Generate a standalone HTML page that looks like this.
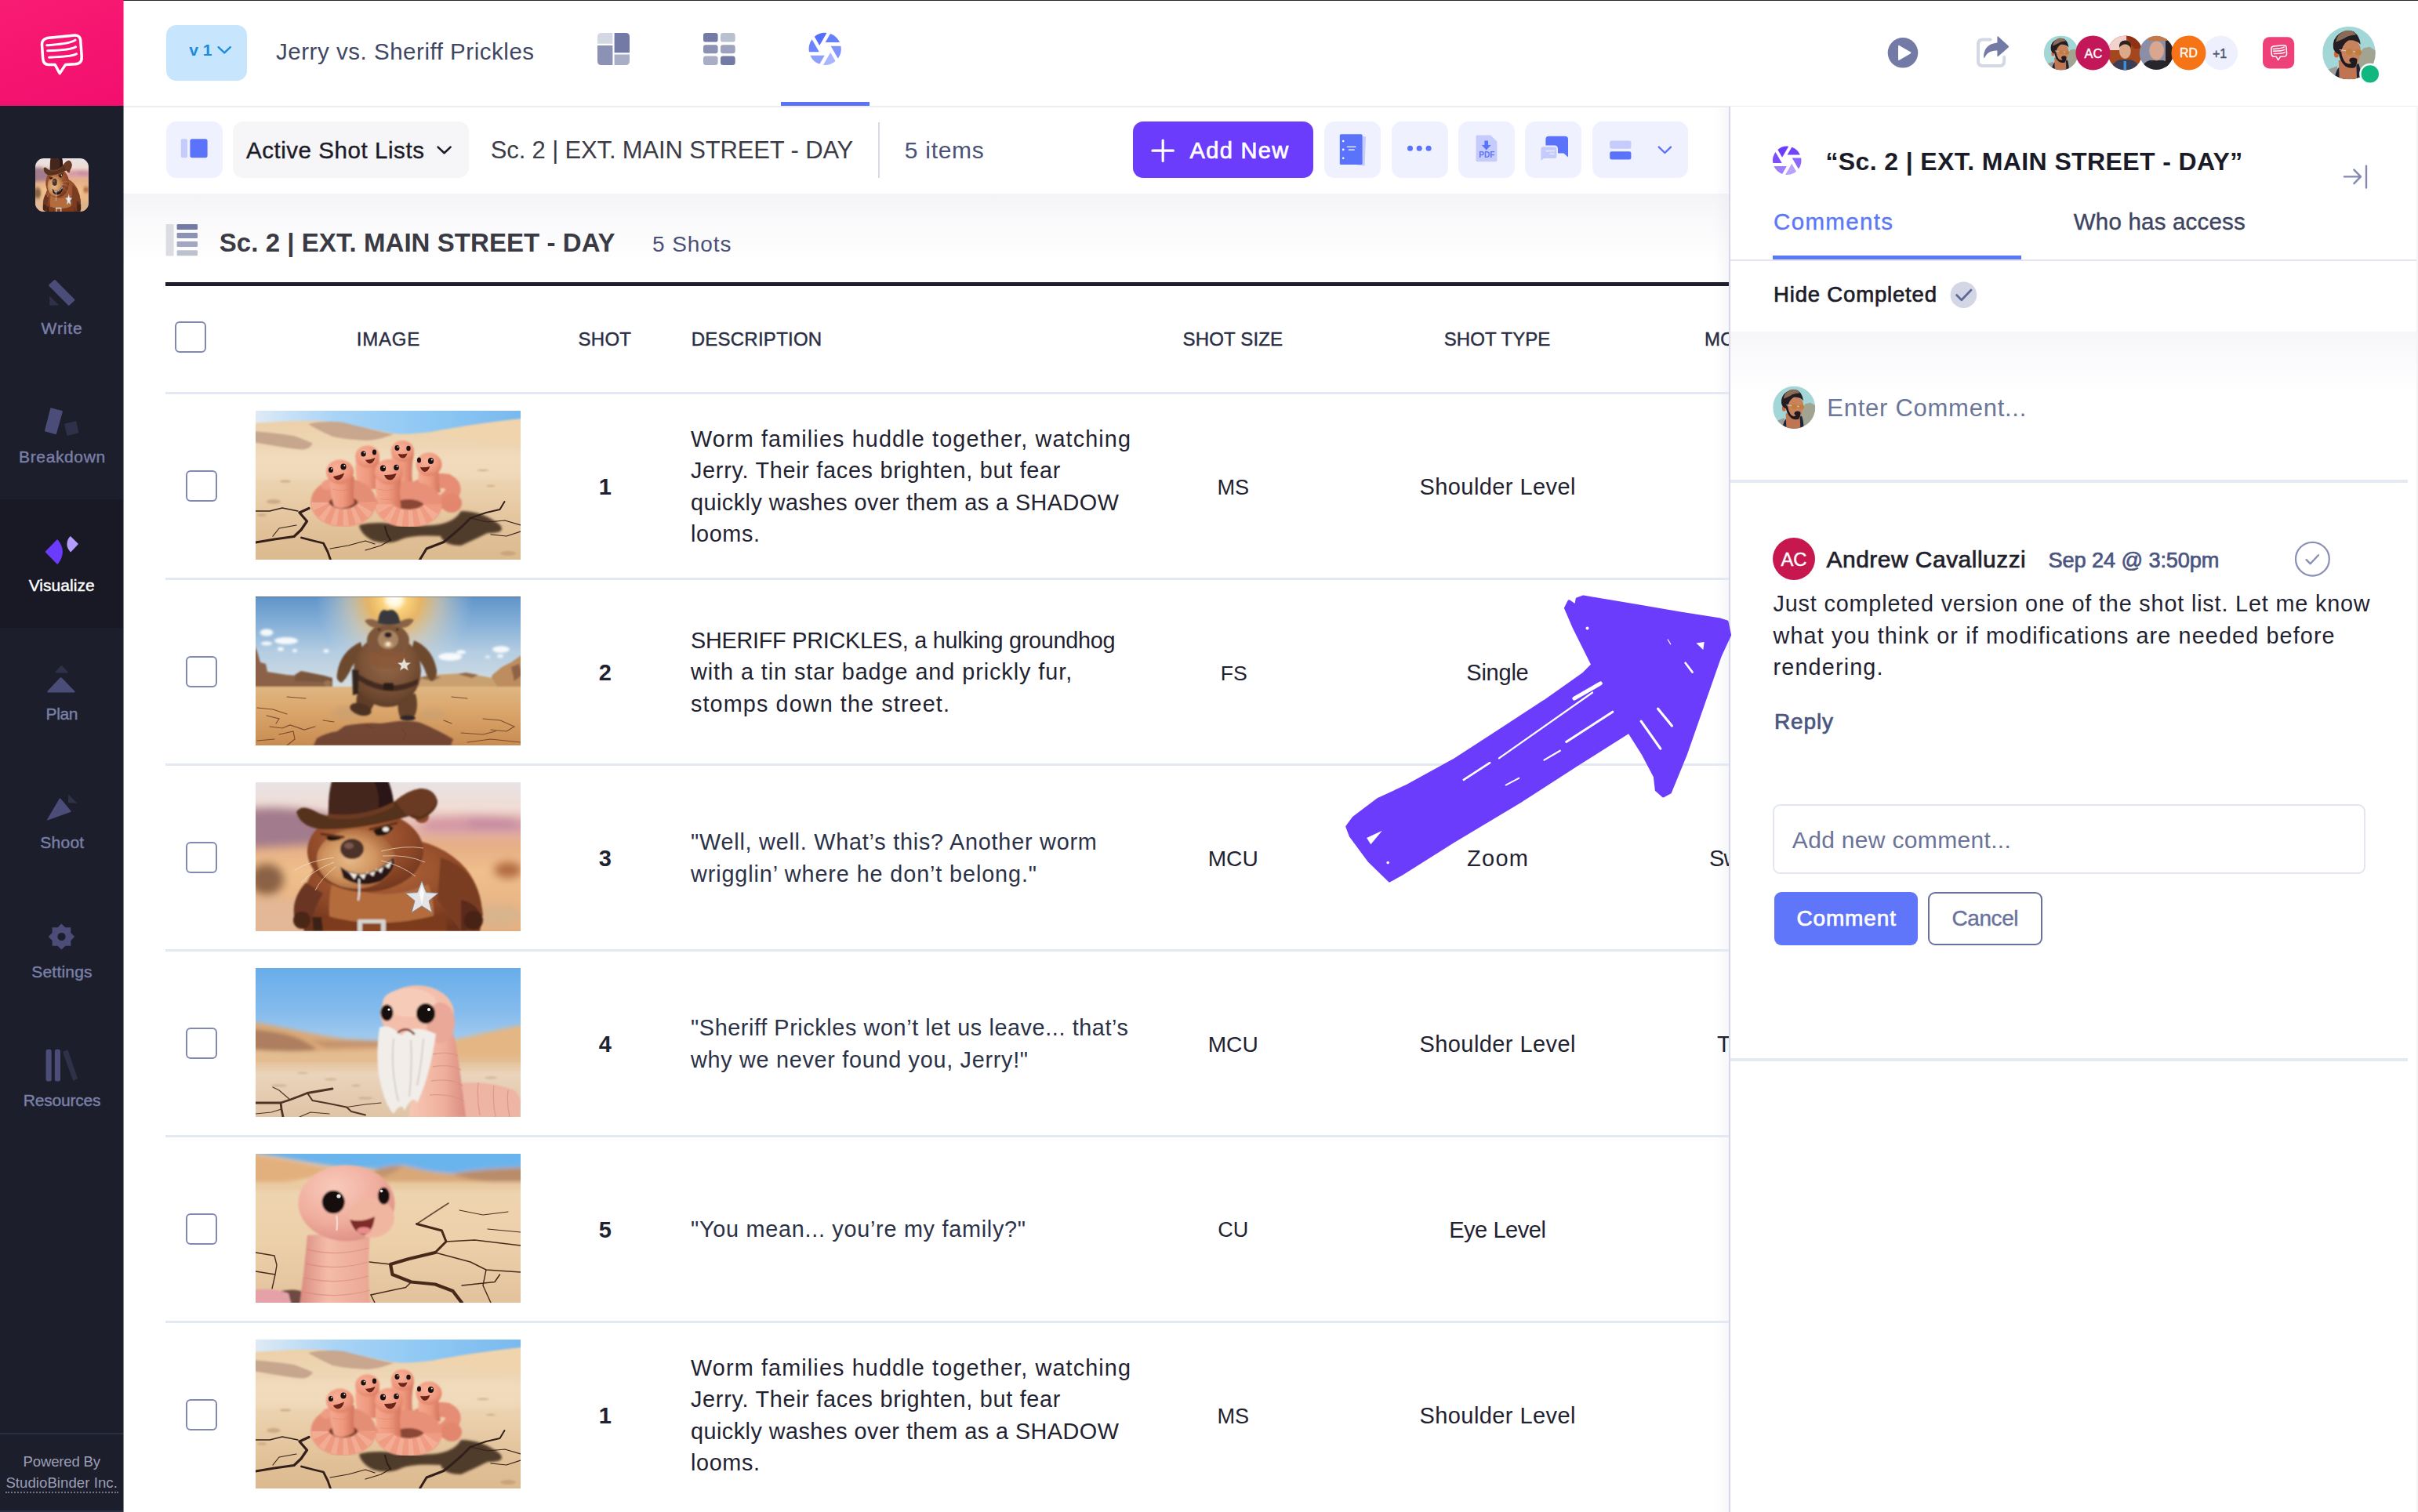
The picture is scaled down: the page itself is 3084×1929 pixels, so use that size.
<!DOCTYPE html>
<html lang="en"><head><meta charset="utf-8"><title>Shot List</title>
<style>
*{box-sizing:border-box;margin:0;padding:0}
html,body{width:3084px;height:1929px;overflow:hidden;background:#fff}
body{font-family:"Liberation Sans",sans-serif;color:#1f2230;position:relative}
.abs{position:absolute}
.t{position:absolute;white-space:pre;line-height:1}
.sb{-webkit-text-stroke:.7px currentColor}
.mb{-webkit-text-stroke:.4px currentColor}
#side{left:0;top:0;width:157px;height:1929px;background:#1d1e2c;border-right:0}
#logo{left:0;top:0;width:157px;height:135px;background:linear-gradient(160deg,#f91c73 0%,#f20e6e 100%)}
#navact{left:0;top:637px;width:157px;height:164px;background:#181924}
.nl{color:#7a80a8;font-size:21px}
#top{left:157px;top:0;width:2927px;height:137px;background:#fff;border-top:1px solid #26262e;border-bottom:2px solid #ecedf1}
#bandg{left:157px;top:247px;width:2048px;height:90px;background:linear-gradient(#f4f4f7 0,#f9f9fb 35%,#fff 100%)}
.btn{position:absolute;top:155px;height:72px;border-radius:13px;background:#eff1fe}
.hline{position:absolute;background:#e3e9f3;height:3px;left:211px;width:1994px}
.cb{position:absolute;width:40px;height:40px;border:2px solid #8289b0;border-radius:6px;background:#fff}
.th{color:#2a2e44;-webkit-text-stroke:.45px currentColor}
.num{font-size:29px;font-weight:700;color:#1f2230}
.desc{position:absolute;left:881px;font-size:30px;line-height:40.4px;color:#22263a;white-space:pre}
.cell{font-size:29px;color:#1f2230;z-index:5}
.thumb{position:absolute;left:326px;width:338px;height:190px;overflow:hidden}
#panel{left:2205px;top:136px;width:879px;height:1793px;background:#fff;border-left:2px solid #d6d7e8}
.av{position:absolute;border-radius:50%;overflow:hidden}
</style></head>
<body>
<div id="side" class="abs"></div>
<div id="logo" class="abs"></div>
<div id="navact" class="abs"></div>
<div class="abs" id="edgecol" style="left:157px;top:0;width:1px;height:1929px;background:linear-gradient(#f20e6e 0,#f20e6e 135px,#1d1e2c 135px);opacity:.55;z-index:4"></div>
<svg class="abs" style="left:0;top:0" width="157" height="1929" viewBox="0 0 157 1929">
<!-- logo -->
<g fill="none" stroke="#fff" stroke-linecap="round" stroke-linejoin="round">
<path stroke-width="3.5" d="M53.5 57 C53.2 52.5 55.5 50 60 48.6 L93.5 45.2 C99.5 44.6 102.4 46.5 102.8 52 L104.2 72 C104.6 78.5 102 81.3 96 81.8 L83.6 82.4 L76.2 93.6 L70.2 82.6 L62 82.6 C57 82.6 55 79.5 54.6 74 Z"/>
<path stroke-width="3" d="M59.8 57.8 C72 56.8 90 56 96 51.2"/>
<path stroke-width="3" d="M60.6 64.8 C74 64.4 91 63.5 96.6 59.8"/>
<path stroke-width="3" d="M62.6 73.2 C76 72.8 92 72 97.6 68.8"/>
</g>
<!-- write -->
<path fill="#4b4d78" d="M62.4 363.2 L69 357.2 Q69.8 356.6 70.6 357.3 L95 381.8 Q95.7 382.6 95 383.4 L88.6 389.6 Q87.8 390.2 87 389.5 L62.4 364.8 Q61.8 364 62.4 363.2Z"/>
<path fill="#2f3148" d="M63.2 377.4 L75.4 389.4 L64.2 389.4 Q63.2 389.4 63.2 388.4Z"/>
<!-- breakdown -->
<path fill="#4b4d78" d="M65.6 520.4 L79 523.9 Q80.1 524.3 79.8 525.4 L72 553.2 Q71.6 554.4 70.4 554.1 L57.8 550.4 Q56.8 550 57.1 548.9 L64.2 521.2 Q64.5 520.1 65.6 520.4Z"/>
<path fill="#2f3148" d="M83 540.6 L96 537.3 Q97 537.1 97.3 538.1 L100.3 551.2 Q100.5 552.2 99.5 552.5 L86.6 555.8 Q85.6 556 85.3 555 L82.2 541.8 Q82 540.9 83 540.6Z"/>
<!-- visualize -->
<path fill="#6b3bff" d="M57.4 704 L72.6 688.6 Q73.2 688 73.8 688.8 Q79.8 696 79.9 704 Q79.8 712.2 73.8 719.4 Q73.2 720.1 72.6 719.5Z"/>
<path fill="#b79cff" d="M90.2 684.2 L100 694.1 L90.6 704 Q89.8 704.6 89.2 703.6 Q85.4 699.2 85.4 694.1 Q85.4 689 89.2 684.6 Q89.7 684 90.2 684.2Z"/>
<!-- plan -->
<path fill="#2f3148" d="M71.6 858.4 Q69.6 858.4 71 856.8 L77.6 849.4 Q78.5 848.5 79.4 849.4 L86.2 856.8 Q87.6 858.4 85.6 858.4Z"/>
<path fill="#4b4d78" d="M61.6 883.4 Q59.2 883.4 60.8 881.6 L76.4 864.8 Q77.6 863.6 78.8 864.8 L95 881.6 Q96.6 883.4 94.2 883.4Z"/>
<!-- shoot -->
<path fill="#4b4d78" d="M60.6 1046.4 Q59.6 1046.7 60.2 1045.6 L75.8 1018.8 Q76.5 1017.8 77.3 1018.7 L90.4 1034.4 Q91.2 1035.5 90 1036Z"/>
<path fill="#2f3148" d="M87.2 1014.4 Q87.3 1013.2 88.2 1014.1 L97.4 1023.8 Q98.2 1024.8 97 1024.8 L87.8 1024.2 Q87 1024.1 87 1023.3Z"/>
<!-- settings -->
<path fill="#4b4d78" fill-rule="evenodd" d="M78.4 1178.4 L83.4 1183.2 L90.3 1183.2 L90.3 1190.1 L95.2 1195 L90.3 1199.9 L90.3 1206.8 L83.4 1206.8 L78.4 1211.6 L73.5 1206.8 L66.6 1206.8 L66.6 1199.9 L61.7 1195 L66.6 1190.1 L66.6 1183.2 L73.5 1183.2Z M78.5 1189.9 a5.1 5.1 0 1 0 .01 0Z"/>
<!-- resources -->
<rect x="58.6" y="1338.7" width="7" height="40.8" rx="2.2" fill="#4b4d78"/>
<rect x="69.9" y="1338.7" width="7.1" height="40.8" rx="2.2" fill="#4b4d78"/>
<path fill="#2f3148" d="M80.6 1341.8 L85.6 1339.6 Q86.6 1339.3 86.9 1340.2 L98.8 1375.4 Q99 1376.2 98.2 1376.6 L94 1378.6 Q93.2 1378.9 92.9 1378 L80.2 1342.8 Q80 1342.1 80.6 1341.8Z"/>
</svg>
<div class="abs" style="left:45px;top:202px;width:68px;height:68px;border-radius:11px;overflow:hidden"><svg width="68" height="68" viewBox="0 0 338 190" preserveAspectRatio="none"><use href="#i3all"/></svg></div>

<span class="t nl mb" style="left:52.6px;top:407.5px;font-size:21px;letter-spacing:0.89px;">Write</span>
<span class="t nl mb" style="left:24.1px;top:571.7px;font-size:21px;letter-spacing:0.62px;">Breakdown</span>
<span class="t nl mb" style="left:36.7px;top:736.2px;font-size:21px;letter-spacing:0.04px;color:#fff;">Visualize</span>
<span class="t nl mb" style="left:58.6px;top:900.4px;font-size:21px;letter-spacing:-0.44px;">Plan</span>
<span class="t nl mb" style="left:51.2px;top:1064.4px;font-size:21px;letter-spacing:0.28px;">Shoot</span>
<span class="t nl mb" style="left:40.3px;top:1229.2px;font-size:21px;letter-spacing:0.19px;">Settings</span>
<span class="t nl mb" style="left:29.8px;top:1393.0px;font-size:21px;letter-spacing:-0.22px;">Resources</span>
<div class="abs" style="left:0;top:1828px;width:157px;height:2px;background:#2a3044"></div>
<span class="t" style="left:29.6px;top:1856.4px;font-size:18.6px;letter-spacing:-0.21px;color:#9a9db6;">Powered By</span>
<span class="t" style="left:7.4px;top:1882.5px;font-size:18.6px;letter-spacing:0.05px;color:#9a9db6;">StudioBinder Inc.</span>
<div class="abs" style="left:7px;top:1903px;width:144px;height:0;border-top:2px dotted #6f7390"></div>
<div class="abs" style="left:0;top:1927px;width:157px;height:2px;background:#2a3044"></div>
<div id="top" class="abs"></div>
<div class="abs" style="left:212px;top:32px;width:103px;height:71px;border-radius:13px;background:#c7e6fd"></div>
<span class="t" style="left:241.2px;top:52.9px;font-size:21.07px;font-weight:700;color:#1b8ce0;">v 1</span>
<span class="t" style="left:352.0px;top:50.7px;font-size:29.5px;letter-spacing:0.53px;color:#3f4763;">Jerry vs. Sheriff Prickles</span>
<svg class="abs" style="left:0;top:0" width="3084" height="137" viewBox="0 0 3084 137"><path d="M278.6 60.2 L286.2 67.4 L293.8 60.2" fill="none" stroke="#1b8ce0" stroke-width="2.4" stroke-linecap="round" stroke-linejoin="round"/><path d="M767 42 H781.4 V55.7 H762 V47 Q762 42 767 42Z" fill="#d4d8e4"/>
<path d="M783.6 42 H798 Q803 42 803 47 V67.3 H783.6Z" fill="#737aa6"/>
<path d="M762 58 H781.4 V83 H767 Q762 83 762 78Z" fill="#8c92b4"/>
<path d="M783.6 69.6 H803 V78 Q803 83 798 83 H783.6Z" fill="#a9aec6"/><rect x="897" y="42" width="18.6" height="11.6" rx="3.2" fill="#737aa6"/><rect x="919" y="42" width="18.7" height="11.6" rx="3.2" fill="#b9c0cf"/><rect x="897" y="57.2" width="18.6" height="11" rx="3.2" fill="#8c92b4"/><rect x="919" y="57.2" width="18.7" height="11" rx="3.2" fill="#9da2be"/><rect x="897" y="71.4" width="18.6" height="11.5" rx="3.2" fill="#a9aec6"/><rect x="919" y="71.4" width="18.7" height="11.5" rx="3.2" fill="#737aa6"/><path d="M1052.63 54.11L1059.06 42.98A20.6 20.6 0 0 1 1071.06 54.11Z" fill="#6580fb"/><path d="M1059.60 58.63L1072.45 58.63A20.6 20.6 0 0 1 1068.81 74.59Z" fill="#7e93fc"/><path d="M1059.16 66.92L1065.59 78.06A20.6 20.6 0 0 1 1049.95 82.88Z" fill="#a9b5fd"/><path d="M1051.77 70.69L1045.34 81.82A20.6 20.6 0 0 1 1033.34 70.69Z" fill="#8fa0fc"/><path d="M1044.80 66.17L1031.95 66.17A20.6 20.6 0 0 1 1035.59 50.21Z" fill="#6c84fb"/><path d="M1045.24 57.88L1038.81 46.74A20.6 20.6 0 0 1 1054.45 41.92Z" fill="#5570fb"/><circle cx="2427" cy="67.3" r="19.3" fill="#737aa6"/><path d="M2421 59.2 Q2421 57.2 2422.8 58.2 L2436.6 66.2 Q2438.2 67.3 2436.6 68.4 L2422.8 76.6 Q2421 77.6 2421 75.6Z" fill="#fff"/><path d="M2538.6 50.4 H2529 Q2523 50.4 2523 56.4 V78 Q2523 84 2529 84 H2550.2 Q2556.2 84 2556.2 78 V73" fill="none" stroke="#d3d7e6" stroke-width="4" stroke-linecap="round"/><path d="M2547.4 47.4 Q2547.4 45.6 2548.8 46.8 L2561.6 58.4 Q2562.6 59.4 2561.6 60.4 L2548.8 71.8 Q2547.4 73 2547.4 71.2 V64.6 Q2535.5 64.2 2531.2 73.4 Q2530.2 75 2530.1 73 Q2530 56.6 2547.4 54.4Z" fill="#737aa6"/><clipPath id="cav1"><circle cx="2628.8" cy="67.4" r="22"/></clipPath>
<g clip-path="url(#cav1)">
<rect x="2606.8" y="45.4" width="44.0" height="44.0" fill="#a3d6d6"/>
<path d="M2635.8 70.4 L2640.8 63.4 L2645.8 62.4 L2650.8 65.4 L2650.8 89.4 L2632.8 89.4Z" fill="#a3a392"/>
<path d="M2610.8 81.4 L2618.8 78.4 L2620.8 89.4 L2610.8 89.4Z" fill="#9c9c98"/>
<path d="M2616.8 89.4 Q2617.8 80.4 2621.8 78.4 L2636.8 76.4 Q2638.8 81.4 2638.8 89.4Z" fill="#1e2438"/>
<path d="M2620.2 73.4 L2620.8 89.4 L2635.4 89.4 L2634.8 75.4Z" fill="#bf7552"/>
<path d="M2620.4 58.4 Q2619.8 71.4 2623.8 76.4 Q2628.8 80.8 2633.8 79.4 Q2638.2 73.4 2638.4 63.4 Q2636.8 56.4 2628.8 56.4Z" fill="#c8825e"/>
<ellipse cx="2618.4" cy="68.4" rx="2.0" ry="3.0" fill="#d4643c"/>
<path d="M2620.2 66.4 Q2620.8 74.4 2625.8 78.4 Q2629.8 81.0 2633.8 79.4 Q2635.8 76.4 2635.6 72.4 Q2632.8 70.4 2629.8 72.0 Q2627.8 74.4 2630.8 75.8 Q2628.8 77.4 2625.8 75.4 Q2622.8 71.4 2622.4 66.4Z" fill="#1f1a1e"/>
<path d="M2615.8 63.4 Q2614.8 55.4 2620.8 51.4 Q2626.8 47.4 2632.8 49.8 Q2637.8 53.4 2638.4 60.4 Q2634.8 56.4 2628.8 56.8 Q2624.8 58.4 2622.8 64.4 L2620.2 68.4 Q2616.8 67.4 2615.8 63.4Z" fill="#241d22"/>
<path d="M2617.8 58.4 Q2618.8 51.4 2625.8 48.8 Q2631.8 47.8 2634.8 52.4 Q2628.8 52.4 2624.8 55.4 Q2620.8 57.4 2617.8 58.4Z" fill="#8a6b58"/>
<ellipse cx="2629.2" cy="66.5" rx="2.9" ry="2.6" fill="#bf7f3a"/>
<ellipse cx="2636.6" cy="66.9" rx="2.7" ry="2.5" fill="#bf7f3a"/>
<path d="M2620.8 64.8 L2626.2 65.6 M2632.0 66.2 L2634.0 66.4" stroke="#d9d0c8" stroke-width="0.7" fill="none"/>
</g><clipPath id="cav3"><circle cx="2710.4" cy="67.4" r="22"/></clipPath><g clip-path="url(#cav3)">
<rect x="2688" y="45" width="45" height="45" fill="#a4471f"/>
<rect x="2688" y="45" width="24" height="19" fill="#f3d2cd"/>
<path d="M2712 45 H2733 V62 H2722 Q2716 55 2712 45Z" fill="#8f3214"/>
<path d="M2693 90 Q2694 78 2704 76 H2717 Q2727 78 2729 90Z" fill="#3a3f58"/>
<rect x="2708.6" y="78" width="3.4" height="12" fill="#3f8fd8"/>
<ellipse cx="2710.4" cy="65" rx="7.4" ry="10" fill="#dba98a"/>
<path d="M2703 61 Q2702 52 2710.4 51.5 Q2719 52 2718 61 Q2714 56 2710.4 56.5 Q2706 56.5 2703 61Z" fill="#2e221e"/>
</g><clipPath id="cav4"><circle cx="2750.3" cy="67.4" r="21.6"/></clipPath><g clip-path="url(#cav4)">
<rect x="2728" y="45" width="45" height="45" fill="#8a8fa6"/>
<rect x="2762" y="45" width="11" height="45" fill="#2b2122"/>
<path d="M2740 45 H2768 V52 H2740Z" fill="#c47a48"/>
<path d="M2731 90 Q2733 79 2742 77 H2759 Q2768 79 2770 90Z" fill="#26262c"/>
<ellipse cx="2750.6" cy="64.5" rx="9.4" ry="12" fill="#d9a78f"/>
<path d="M2742 70 Q2750.6 84 2759.4 70 Q2756 77.5 2750.6 77.5 Q2745 77.5 2742 70Z" fill="#b98a76"/>
</g><circle cx="2669.4" cy="67.4" r="22" fill="#c2185a"/><circle cx="2832.3" cy="67.4" r="21.8" fill="#eef0fd"/><circle cx="2791.5" cy="67.4" r="22" fill="#f67316"/><rect x="2886" y="47.2" width="40.2" height="40.4" rx="8.5" fill="#ee4079"/><g transform="translate(2896.6 57.6) scale(0.39) translate(-53 -45)" fill="none" stroke="#fff" stroke-linecap="round" stroke-linejoin="round">
<path stroke-width="3.85" d="M53.5 57 C53.2 52.5 55.5 50 60 48.6 L93.5 45.2 C99.5 44.6 102.4 46.5 102.8 52 L104.2 72 C104.6 78.5 102 81.3 96 81.8 L83.6 82.4 L76.2 93.6 L70.2 82.6 L62 82.6 C57 82.6 55 79.5 54.6 74 Z"/>
<path stroke-width="3.85" d="M59.8 57.8 C72 56.8 90 56 96 51.2M60.6 64.8 C74 64.4 91 63.5 96.6 59.8M62.6 73.2 C76 72.8 92 72 97.6 68.8"/></g><clipPath id="cavu"><circle cx="2996" cy="67.5" r="33.8"/></clipPath>
<g clip-path="url(#cavu)">
<rect x="2962.2" y="33.7" width="67.6" height="67.6" fill="#a3d6d6"/>
<path d="M3006.8 72.1 L3014.4 61.4 L3022.1 59.8 L3029.8 64.4 L3029.8 101.3 L3002.1 101.3Z" fill="#a3a392"/>
<path d="M2968.3 89.0 L2980.6 84.4 L2983.7 101.3 L2968.3 101.3Z" fill="#9c9c98"/>
<path d="M2977.6 101.3 Q2979.1 87.5 2985.2 84.4 L3008.3 81.3 Q3011.4 89.0 3011.4 101.3Z" fill="#1e2438"/>
<path d="M2982.8 76.7 L2983.7 101.3 L3006.1 101.3 L3005.2 79.8Z" fill="#bf7552"/>
<path d="M2983.1 53.7 Q2982.2 73.6 2988.3 81.3 Q2996.0 88.1 3003.7 85.9 Q3010.4 76.7 3010.7 61.4 Q3008.3 50.6 2996.0 50.6Z" fill="#c8825e"/>
<ellipse cx="2980.0" cy="69.0" rx="3.1" ry="4.6" fill="#d4643c"/>
<path d="M2982.8 66.0 Q2983.7 78.3 2991.4 84.4 Q2997.5 88.4 3003.7 85.9 Q3006.8 81.3 3006.4 75.2 Q3002.1 72.1 2997.5 74.6 Q2994.5 78.3 2999.1 80.4 Q2996.0 82.9 2991.4 79.8 Q2986.8 73.6 2986.2 66.0Z" fill="#1f1a1e"/>
<path d="M2976.0 61.4 Q2974.5 49.1 2983.7 42.9 Q2992.9 36.8 3002.1 40.5 Q3009.8 46.0 3010.7 56.7 Q3005.2 50.6 2996.0 51.2 Q2989.9 53.7 2986.8 62.9 L2982.8 69.0 Q2977.6 67.5 2976.0 61.4Z" fill="#241d22"/>
<path d="M2979.1 53.7 Q2980.6 42.9 2991.4 38.9 Q3000.6 37.4 3005.2 44.5 Q2996.0 44.5 2989.9 49.1 Q2983.7 52.1 2979.1 53.7Z" fill="#8a6b58"/>
<ellipse cx="2996.6" cy="66.1" rx="4.5" ry="4.0" fill="#bf7f3a"/>
<ellipse cx="3008.0" cy="66.7" rx="4.1" ry="3.8" fill="#bf7f3a"/>
<path d="M2983.7 63.5 L2992.0 64.7 M3000.9 65.7 L3004.0 66.0" stroke="#d9d0c8" stroke-width="1.1" fill="none"/>
</g><circle cx="3022.8" cy="94.4" r="13.6" fill="#fff"/><circle cx="3022.8" cy="94.4" r="11.2" fill="#10b77f"/></svg>
<div class="abs" style="left:996px;top:130px;width:113px;height:5px;background:#5b73f5"></div>
<span class="t mb" style="left:2658.5px;top:59.7px;font-size:16.41px;color:#fff;">AC</span>
<span class="t mb" style="left:2780.0px;top:60.2px;font-size:15.78px;color:#fff;">RD</span>
<span class="t mb" style="left:2821.9px;top:60.0px;font-size:16.1px;color:#4a5170;">+1</span>
<div id="bandg" class="abs"></div>
<div class="btn" style="left:212px;width:72px"></div>
<div class="btn" style="left:297px;width:301px;background:#f6f6f9"></div>
<span class="t mb" style="left:313.9px;top:177.2px;font-size:29.5px;letter-spacing:0.56px;color:#1c1c28;">Active Shot Lists</span>
<span class="t" style="left:625.8px;top:176.0px;font-size:31px;letter-spacing:-0.15px;color:#3c3c46;">Sc. 2 | EXT. MAIN STREET - DAY</span>
<div class="abs" style="left:1120px;top:156px;width:2px;height:71px;background:#d9dbe4"></div>
<span class="t" style="left:1153.8px;top:176.8px;font-size:30px;letter-spacing:0.72px;color:#4a5278;">5 items</span>
<div class="btn" style="left:1445px;width:230px;background:#6c3cfc"></div>
<span class="t sb" style="left:1517.5px;top:177.6px;font-size:29px;letter-spacing:1.34px;color:#fff;">Add New</span>
<div class="btn" style="left:1689px;width:72px"></div>
<div class="btn" style="left:1774.5px;width:72px"></div>
<div class="btn" style="left:1860px;width:72px"></div>
<div class="btn" style="left:1945.4px;width:72px"></div>
<div class="btn" style="left:2031px;width:121.5px"></div>
<svg class="abs" style="left:0;top:137px" width="3084" height="240" viewBox="0 137 3084 240"><rect x="230.8" y="177.2" width="8.2" height="24" rx="2" fill="#c5cbfb"/><rect x="242.4" y="177.2" width="22.2" height="24" rx="2.6" fill="#5b73fb"/><path d="M558.6 187.6 L566.6 195.2 L574.6 187.6" fill="none" stroke="#1c1c28" stroke-width="2.6" stroke-linecap="round" stroke-linejoin="round"/><path d="M1470 192.2 H1496.4 M1483.2 179 V205.4" stroke="#fff" stroke-width="3.2" stroke-linecap="round"/><path d="M1736 173.6 L1742 174.4 L1740.6 211.4 L1731 210.8Z" fill="#c5cbfb"/><rect x="1708.8" y="171.2" width="28.8" height="38.8" rx="1.6" fill="#5b73fb"/><circle cx="1713.2" cy="180" r="1.3" fill="#fff"/><circle cx="1713.2" cy="190.9" r="1.3" fill="#fff"/><circle cx="1713.2" cy="201.8" r="1.3" fill="#fff"/><path d="M1718.4 187.3 H1729 M1720.4 191.2 H1727.2" stroke="#fff" stroke-width="1.3" stroke-linecap="round"/><circle cx="1798.5" cy="189.3" r="3.5" fill="#5b73fb"/><circle cx="1810.2" cy="189.3" r="3.5" fill="#5b73fb"/><circle cx="1822.1" cy="189.3" r="3.5" fill="#5b73fb"/><path d="M1884 172.4 H1901 L1909.4 180.6 V204.6 Q1909.4 206.2 1907.8 206.2 H1884 Q1882.5 206.2 1882.5 204.6 V174 Q1882.5 172.4 1884 172.4Z" fill="#c5cbfb"/><path d="M1893.4 179.6 H1898 V185 H1901.6 L1895.7 191.4 L1889.8 185 H1893.4Z" fill="#5b73fb"/><path d="M1975.4 173.8 H1996 Q2000 173.8 2000 177.8 V200.6 L1994.4 195.6 H1975.4 Q1971.4 195.6 1971.4 191.6 V177.8 Q1971.4 173.8 1975.4 173.8Z" fill="#5b73fb"/><path d="M1968.2 186.4 H1982.4 Q1986.2 186.4 1986.2 190.2 V199 Q1986.2 202.8 1982.4 202.8 H1969.6 L1964.6 206.4 V190.2 Q1964.6 186.4 1968.2 186.4Z" fill="#c5cbfb" stroke="#eff1fe" stroke-width="1.6"/><path d="M1972 192.6 H1982.6 M1977 196.4 H1981.8" stroke="#eff1fe" stroke-width="1.4" stroke-linecap="round"/><rect x="2053.2" y="179.4" width="27.2" height="10.4" rx="2.2" fill="#c5cbfb"/><rect x="2053.2" y="193.2" width="27.2" height="10.2" rx="2.2" fill="#5b73fb"/><path d="M2115.8 187.6 L2123.4 195 L2131 187.6" fill="none" stroke="#5b73fb" stroke-width="2.4" stroke-linecap="round" stroke-linejoin="round"/><rect x="211.6" y="286" width="10" height="40.4" rx="1" fill="#dcdde3"/><rect x="225.6" y="286" width="26.4" height="7" rx="1.2" fill="#737aa6"/><rect x="225.6" y="297" width="26.4" height="7" rx="1.2" fill="#8c92b4"/><rect x="225.6" y="308" width="26.4" height="7" rx="1.2" fill="#a3a8c2"/><rect x="225.6" y="319.2" width="26.4" height="7" rx="1.2" fill="#bcc3cf"/></svg>
<span class="t" style="left:1886.3px;top:193.2px;font-size:10.01px;font-weight:700;color:#5b73fb;">PDF</span>
<div class="abs" style="left:2187px;top:137px;width:18px;height:1792px;background:linear-gradient(90deg,rgba(240,240,245,0),rgba(228,229,238,.3))"></div>
<span class="t" style="left:279.7px;top:293.4px;font-size:33px;letter-spacing:0.06px;font-weight:700;color:#3a3a44;">Sc. 2 | EXT. MAIN STREET - DAY</span>
<span class="t" style="left:832.0px;top:297.6px;font-size:28px;letter-spacing:0.92px;color:#4a5078;">5 Shots</span>
<div class="abs" style="left:211px;top:360px;width:1994px;height:4.5px;background:#1e1e2c"></div>
<div class="cb" style="left:223px;top:410px"></div>
<span class="t th" style="left:454.8px;top:421.3px;font-size:24px;letter-spacing:0.76px;">IMAGE</span>
<span class="t th" style="left:737.6px;top:421.3px;font-size:24px;letter-spacing:0.24px;">SHOT</span>
<span class="t th" style="left:881.7px;top:421.3px;font-size:24px;letter-spacing:0.25px;">DESCRIPTION</span>
<span class="t th" style="left:1508.5px;top:421.3px;font-size:24px;letter-spacing:0.17px;">SHOT SIZE</span>
<span class="t th" style="left:1841.7px;top:421.3px;font-size:24px;letter-spacing:0.06px;">SHOT TYPE</span>
<span class="t th" style="left:2174.0px;top:421.3px;font-size:24px;letter-spacing:0.33px;">MOVEMENT</span>
<div class="hline" style="top:500px"></div>
<div class="cb" style="left:236.5px;top:599.7px"></div>
<div class="thumb" style="top:524px"><svg width="338" height="190" viewBox="0 0 338 190" preserveAspectRatio="none">
<defs>
<linearGradient id="i1sky" x1="0" y1="0" x2="1" y2="0"><stop offset="0" stop-color="#dfeaf5"/><stop offset=".3" stop-color="#a9d3f5"/><stop offset=".65" stop-color="#8ec8f4"/><stop offset="1" stop-color="#7ab9ee"/></linearGradient>
<linearGradient id="i1gr" x1="0" y1="0" x2="0" y2="1"><stop offset="0" stop-color="#ecd0aa"/><stop offset=".3" stop-color="#efd9b9"/><stop offset=".5" stop-color="#ead0ac"/><stop offset=".75" stop-color="#e2c29a"/><stop offset="1" stop-color="#dcb98e"/></linearGradient>
<linearGradient id="i1neck" x1="0" y1="0" x2="1" y2="0"><stop offset="0" stop-color="#f5a88e"/><stop offset=".55" stop-color="#ee987e"/><stop offset="1" stop-color="#d2725a"/></linearGradient>
<radialGradient id="i1hd" cx=".4" cy=".35" r=".75"><stop offset="0" stop-color="#f9b098"/><stop offset=".6" stop-color="#ef997f"/><stop offset="1" stop-color="#d87860"/></radialGradient>
<filter id="i1b1"><feGaussianBlur stdDeviation=".9"/></filter>
<filter id="i1b2"><feGaussianBlur stdDeviation="1.5"/></filter>
<filter id="i1b5"><feGaussianBlur stdDeviation="4"/></filter>
</defs>
<g id="i1all">
<rect width="338" height="190" fill="url(#i1sky)"/>
<g filter="url(#i1b1)">
<path d="M-4 16 C30 14 60 12 84 13 C120 17 150 24 176 29 C196 31 210 28 224 27 C260 20 300 14 342 10 V194 H-4Z" fill="url(#i1gr)"/>
<path d="M67 17 C84 13 100 14 112 15 C140 22 160 27 176 30 C160 36 150 38 140 38 C120 37 108 35 98 33 C86 28 76 22 67 17Z" fill="#c9a68e"/>
<path d="M-4 26 C20 28 36 30 49 32 C60 36 68 39 73 42 C70 47 64 50 59 50 C36 47 16 43 -4 40Z" fill="#c7a68e"/>
<path d="M222 30 C262 22 300 14 342 10 V44 C300 40 260 36 222 30Z" fill="#f0d4ae"/>
</g>
<g filter="url(#i1b5)" opacity=".7"><rect x="-4" y="52" width="346" height="34" fill="#f1dcbd"/></g>
<!-- ground specks -->
<g fill="#b8906a" opacity=".55" filter="url(#i1b1)">
<ellipse cx="38" cy="90" rx="7" ry="1.6"/><ellipse cx="23" cy="116" rx="9" ry="3"/><ellipse cx="8" cy="133" rx="6" ry="1.6"/><ellipse cx="300" cy="96" rx="6" ry="1.2"/><ellipse cx="322" cy="182" rx="10" ry="3"/><ellipse cx="290" cy="76" rx="8" ry="1.2"/>
</g>
<!-- shadows -->
<g filter="url(#i1b2)" fill="#3e2a1c" opacity=".88">
<path d="M132 146 Q150 140 200 146 Q250 150 262 128 Q290 128 312 146 Q320 156 296 156 Q280 164 262 172 Q240 172 236 160 Q200 158 186 164 Q170 172 150 166 Q134 158 132 146Z"/>
</g>
<!-- cracks -->
<g fill="none" stroke="#33201a" stroke-linecap="round" stroke-linejoin="round">
<path stroke-width="3.2" d="M0 168 L24 164 L49 160.5 L58 152 L65.5 141 L56 130 L68 124.5"/>
<path stroke-width="2.8" d="M58.5 162 L74 166 L86.5 169 L92 180 L95.5 190"/>
<path stroke-width="3" d="M209.5 190 L218 176 L240 167.5 L251.5 158 L263 148 L274 137"/>
<path stroke-width="2" d="M274 137 L294 130 L311.5 126 L317.5 116"/>
<path stroke-width="2.2" d="M165 148 L168 158 L172 165"/>
<path stroke-width="1.3" d="M0 128 L18 128 L34 124 L54 128"/>
<path stroke-width="1.2" d="M22 160 L30 150 L52 146 M95 176 L118 172 L140 166 L152 170"/>
<path stroke-width="1.2" d="M140 178 L160 172 L172 165 M274 137 L296 142 L318 140 L338 146 M300 158 L320 160 L338 154"/>
</g>
<!-- worms -->
<g filter="url(#i1b1)">
<!-- back worms B, D -->
<path d="M128 62 Q126 84 132 100 L156 100 Q154 80 158 62Z" fill="url(#i1neck)"/>
<path d="M174 54 Q172 72 176 92 L200 92 Q198 72 202 54Z" fill="url(#i1neck)"/>
<ellipse cx="142.6" cy="58.5" rx="15.4" ry="14" fill="url(#i1hd)"/>
<ellipse cx="187.3" cy="51.5" rx="14.6" ry="13.6" fill="url(#i1hd)"/>
<!-- ring E (right, behind) -->
<path d="M190 110 Q220 86 244 90 Q262 100 240 116" fill="none" stroke="#e78c74" stroke-width="19" stroke-linecap="round"/>
<ellipse cx="250" cy="118" rx="13" ry="12" fill="#e2866e"/>
<path d="M208 74 Q206 92 212 108 L236 104 Q232 88 234 72Z" fill="url(#i1neck)"/>
<ellipse cx="221" cy="68.5" rx="16.4" ry="15" fill="url(#i1hd)"/>
<!-- ring A -->
<ellipse cx="112" cy="117" rx="30" ry="19.5" fill="#7a3e30" stroke="#e58e76" stroke-width="23"/>
<!-- ring C -->
<ellipse cx="195" cy="119.5" rx="31" ry="18" fill="#8a4636" stroke="#e89078" stroke-width="23"/>
<!-- small tail between -->
<ellipse cx="92" cy="94" rx="9" ry="6" fill="#ee9c84" transform="rotate(-25 92 94)"/>
<!-- neck A -->
<path d="M95 84 Q94 104 100 122 Q112 128 126 118 Q124 100 126 84Z" fill="url(#i1neck)"/>
<ellipse cx="107.6" cy="78" rx="17.6" ry="15.4" fill="url(#i1hd)"/>
<!-- neck C -->
<path d="M153 86 Q152 110 160 130 L186 126 Q182 104 186 84Z" fill="url(#i1neck)"/>
<ellipse cx="169.8" cy="78" rx="18" ry="16" fill="url(#i1hd)"/>
<!-- front arcs -->
<path d="M82 117 A30 19.5 0 0 0 142 117" fill="none" stroke="#ee9a80" stroke-width="23"/>
<path d="M164 119.5 A31 18 0 0 0 226 119.5" fill="none" stroke="#f09c82" stroke-width="23"/>
</g>
<!-- stripes -->
<g fill="none" stroke="#f9c2ae" stroke-width="21" opacity=".45">
<path d="M82 117 A30 19.5 0 0 0 142 117" stroke-dasharray="6 7"/>
<path d="M164 119.5 A31 18 0 0 0 226 119.5" stroke-dasharray="6 7"/>
</g>
<g fill="none" stroke="#d9846c" stroke-width="1" opacity=".5">
<path d="M98 100 Q110 104 124 98 M156 100 Q170 104 184 98 M158 112 Q172 116 185 110"/>
</g>
<!-- faces -->
<g fill="#1b1211">
<ellipse cx="96" cy="75.5" rx="3" ry="3.6"/><ellipse cx="112" cy="71.5" rx="3.6" ry="3.9"/>
<ellipse cx="137.5" cy="55" rx="3.2" ry="3.6"/><ellipse cx="151.5" cy="53" rx="2.6" ry="3.4"/>
<ellipse cx="162.5" cy="73.5" rx="3.6" ry="3.9"/><ellipse cx="179.5" cy="72.5" rx="3.3" ry="3.8"/>
<ellipse cx="180.5" cy="47.5" rx="3" ry="3.4"/><ellipse cx="195" cy="48" rx="2.7" ry="3.3"/>
<ellipse cx="208.5" cy="63" rx="2.5" ry="3.6"/><ellipse cx="223.5" cy="64" rx="3.6" ry="3.9"/>
</g>
<g fill="#fff" opacity=".9"><circle cx="113.4" cy="70" r="1"/><circle cx="97" cy="74" r=".9"/><circle cx="164" cy="72" r="1"/><circle cx="180.6" cy="71" r="1"/><circle cx="224.8" cy="62.6" r="1"/><circle cx="138.6" cy="53.6" r=".9"/><circle cx="181.6" cy="46.2" r=".9"/></g>
<g fill="#6b2418">
<path d="M99 84 Q106 83 113 79.5 Q111 88 105 88.4 Q100.6 88 99 84Z"/>
<path d="M140 62.6 Q146 63 152.6 60 Q150 67.4 145.4 67.4 Q141.6 66.6 140 62.6Z"/>
<path d="M164 82 Q172 82.6 179.6 80 Q177 88.4 171.6 88.6 Q166 88 164 82Z"/>
<path d="M181.6 55 Q187.6 56 193.6 54.4 Q191.6 60.6 187.4 60.6 Q183.4 60 181.6 55Z"/>
<path d="M210 72 Q216 73 222.4 71 Q220 78 215.6 78 Q211.6 77 210 72Z"/>
</g>
</g>
</svg></div>
<span class="t num" style="left:763.7px;top:606.8px;font-size:29px;font-weight:700;">1</span>
<span class="t" style="left:881.0px;top:545.8px;font-size:28.8px;letter-spacing:1.13px;color:#1f2230;">Worm families huddle together, watching</span>
<span class="t" style="left:881.0px;top:586.2px;font-size:28.8px;letter-spacing:0.72px;color:#1f2230;">Jerry. Their faces brighten, but fear</span>
<span class="t" style="left:881.0px;top:626.6px;font-size:28.8px;letter-spacing:0.46px;color:#1f2230;">quickly washes over them as a SHADOW</span>
<span class="t" style="left:881.0px;top:667.0px;font-size:28.8px;letter-spacing:0.63px;color:#1f2230;">looms.</span>
<span class="t cell" style="left:1552.4px;top:608.3px;font-size:27.13px;">MS</span>
<span class="t cell" style="left:1810.5px;top:606.8px;font-size:29px;letter-spacing:0.42px;">Shoulder Level</span>
<div class="hline" style="top:737px"></div>
<div class="cb" style="left:236.5px;top:836.7px"></div>
<div class="thumb" style="top:761px"><svg width="338" height="190" viewBox="0 0 338 190" preserveAspectRatio="none">
<defs>
<linearGradient id="i2sky" x1="0" y1="0" x2="0" y2="1"><stop offset="0" stop-color="#5f94c9"/><stop offset=".3" stop-color="#86b0d8"/><stop offset=".6" stop-color="#b4cde2"/><stop offset="1" stop-color="#d6dfe4"/></linearGradient>
<radialGradient id="i2sun" cx="177" cy="3" r="100" gradientUnits="userSpaceOnUse"><stop offset="0" stop-color="#ffffff"/><stop offset=".09" stop-color="#fff6d8"/><stop offset=".16" stop-color="#fbd27c"/><stop offset=".34" stop-color="#f3b75a" stop-opacity=".9"/><stop offset=".6" stop-color="#ecd2a6" stop-opacity=".55"/><stop offset="1" stop-color="#cfdce6" stop-opacity="0"/></radialGradient>
<linearGradient id="i2gr" x1="0" y1="0" x2="0" y2="1"><stop offset="0" stop-color="#dfb683"/><stop offset=".35" stop-color="#dba86e"/><stop offset="1" stop-color="#c88a50"/></linearGradient>
<radialGradient id="i2fur" cx=".5" cy=".38" r=".7"><stop offset="0" stop-color="#94694a"/><stop offset=".55" stop-color="#7a5236"/><stop offset="1" stop-color="#563724"/></radialGradient>
<filter id="i2b1"><feGaussianBlur stdDeviation=".9"/></filter>
<filter id="i2b2"><feGaussianBlur stdDeviation="1.8"/></filter>
<filter id="i2b4"><feGaussianBlur stdDeviation="4"/></filter>
</defs>
<rect width="338" height="118" fill="url(#i2sky)"/>
<rect width="338" height="118" fill="url(#i2sun)"/>
<g filter="url(#i2b2)" fill="#fff" opacity=".9">
<ellipse cx="14" cy="46" rx="8.5" ry="4.5"/><ellipse cx="39" cy="56.5" rx="15" ry="4.5"/><ellipse cx="14" cy="60" rx="7" ry="2.5"/><ellipse cx="32" cy="67" rx="4" ry="2.5"/><ellipse cx="50" cy="69" rx="3" ry="2"/><ellipse cx="90" cy="69.5" rx="3.5" ry="2.2"/>
<ellipse cx="248" cy="77" rx="15" ry="5"/><ellipse cx="313" cy="67.5" rx="11" ry="4.2"/><ellipse cx="312" cy="76" rx="4" ry="2"/><ellipse cx="296" cy="77" rx="3" ry="1.6"/><ellipse cx="262" cy="71" rx="6" ry="2.5"/>
</g>
<g filter="url(#i2b1)">
<path d="M-2 62 L2 70 L6 84 L13 86 L15 96 L40 100 L98 104 L98 118 L-2 118Z" fill="#8b6246"/>
<path d="M50 100 L58 95 L88 101 L98 104 L98 110 L50 108Z" fill="#7a563e"/>
<path d="M340 74 L326 84 L314 90 L302 100 L296 118 L340 118Z" fill="#bd8c5e"/>
<path d="M326 90 L336 86 L340 100 L330 108Z" fill="#8e6444"/>
<path d="M206 104 L228 100 L262 98 L286 101 L302 104 L310 118 L206 118Z" fill="#c9a070"/>
<path d="M258 99 L268 97 L284 100 L276 104Z" fill="#94694a"/>
<path d="M208 104 L222 100 L236 103 L226 108Z" fill="#9a7050"/>
<rect x="-2" y="115" width="342" height="78" fill="url(#i2gr)"/>
<ellipse cx="92" cy="111" rx="5" ry="4" fill="#9a7452"/>
</g>
<!-- ground shadow -->
<g filter="url(#i2b1)">
<path d="M74 190 L78 181 Q90 174 104 172 L114 165 Q140 160 160 162 L182 159 Q200 158 210 161 Q232 170 252 182 L249 190Z" fill="#6a4030" opacity=".92"/>
</g>
<!-- dust -->
<g filter="url(#i2b4)" fill="#caa072" opacity=".85"><ellipse cx="116" cy="148" rx="17" ry="8"/><ellipse cx="226" cy="151" rx="17" ry="6"/></g>
<!-- cracks -->
<g fill="none" stroke="#6e3f22" stroke-width="1.2" stroke-linecap="round" opacity=".85">
<path d="M2 142 L22 144 L40 150 M14 152 L30 156 L26 162 M18 166 L34 168 L44 164 L62 170 L76 166 M30 176 L48 172 L50 182 L40 190 M2 184 L24 182"/>
<path d="M290 156 L312 158 L330 166 L320 172 L300 170 M262 174 L290 176 L306 172 M240 158 L250 162 M270 186 L300 182 L338 186"/>
<path d="M186 168 L192 176 L188 184 M140 164 L150 168 M86 158 L100 160 M250 128 L270 130 M40 128 L64 130"/>
</g>
<!-- groundhog -->
<g filter="url(#i2b1)">
<!-- legs -->
<path d="M132 118 Q124 138 134 148 Q148 150 152 134Z" fill="#5e3c28"/>
<ellipse cx="134" cy="144" rx="14" ry="7.5" fill="#4e3224" transform="rotate(16 134 144)"/>
<path d="M182 128 Q180 150 186 156 Q200 158 204 150 Q208 138 204 124Z" fill="#65432c"/>
<ellipse cx="194" cy="155" rx="10" ry="3.6" fill="#2e2828"/>
<!-- arms -->
<path d="M134 58 Q108 70 104 98 Q102 108 110 110 Q116 104 120 96 Q124 84 138 74Z" fill="#6d482f"/>
<path d="M202 56 Q226 66 231 94 Q232 104 224 108 Q218 102 216 94 Q212 82 198 72Z" fill="#6d482f"/>
<!-- torso -->
<ellipse cx="168" cy="95" rx="43" ry="46" fill="url(#i2fur)"/>
<ellipse cx="169" cy="56" rx="27" ry="21" fill="#7d573b"/>
<ellipse cx="168" cy="80" rx="26" ry="12" fill="#8a5838" opacity=".8"/>
<!-- belt -->
<path d="M131 99 Q168 124 207 105 L207 112 Q168 132 131 107Z" fill="#442c20"/>
<rect x="163" y="110" width="13" height="9.5" rx="1.5" fill="#2a1e18"/>
<path d="M123 93 L131.5 94 L131 124 L124 126Z" fill="#33261f"/>
<!-- face -->
<ellipse cx="169" cy="55" rx="13" ry="12" fill="#a98462"/>
<ellipse cx="169" cy="49" rx="4.6" ry="3.4" fill="#2c2020"/>
<ellipse cx="169" cy="61" rx="6" ry="4" fill="#c9a27a"/>
<rect x="166.5" y="58.5" width="5" height="4.6" rx=".8" fill="#f4ead4"/>
<circle cx="157.6" cy="42" r="1.5" fill="#17110f"/><circle cx="180.8" cy="42" r="1.5" fill="#17110f"/>
<!-- hat -->
<path d="M139 31 Q146 41 156 40 Q168 33 184 40 Q196 41 202 30 Q196 26 186 31 Q168 36 152 30 Q144 27 139 31Z" fill="#8a6446"/>
<path d="M156 34 Q157 18 164 17 Q168 19 172 17 Q182 17 184.5 34 Q170 38 156 34Z" fill="#38383e"/>
</g>
<!-- star -->
<path d="M189.4 78.6 L191.8 84.2 L197.8 84.6 L193.2 88.6 L194.6 94.4 L189.4 91.2 L184.2 94.4 L185.6 88.6 L181 84.6 L187 84.2Z" fill="#e6ded2" stroke="#9a8e80" stroke-width=".7"/>
<rect x="0" y="0" width="338" height="1" fill="#5a5a5e" opacity=".6"/>
</svg></div>
<span class="t num" style="left:763.7px;top:843.8px;font-size:29px;font-weight:700;">2</span>
<span class="t" style="left:881.0px;top:803.0px;font-size:28.8px;letter-spacing:-0.25px;color:#1f2230;">SHERIFF PRICKLES, a hulking groundhog</span>
<span class="t" style="left:881.0px;top:843.4px;font-size:28.8px;letter-spacing:0.94px;color:#1f2230;">with a tin star badge and prickly fur,</span>
<span class="t" style="left:881.0px;top:883.8px;font-size:28.8px;letter-spacing:1.10px;color:#1f2230;">stomps down the street.</span>
<span class="t cell" style="left:1556.7px;top:845.7px;font-size:26.68px;">FS</span>
<span class="t cell" style="left:1870.3px;top:843.8px;font-size:29px;letter-spacing:-0.24px;">Single</span>
<div class="hline" style="top:974px"></div>
<div class="cb" style="left:236.5px;top:1073.7px"></div>
<div class="thumb" style="top:998px"><svg width="338" height="190" viewBox="0 0 338 190" preserveAspectRatio="none">
<defs>
<linearGradient id="i3bg" x1="0" y1="0" x2="0" y2="1"><stop offset="0" stop-color="#e8e3e5"/><stop offset=".17" stop-color="#f0dcd4"/><stop offset=".3" stop-color="#e3b4aa"/><stop offset=".42" stop-color="#e6ae86"/><stop offset=".6" stop-color="#efbf8c"/><stop offset="1" stop-color="#e4ae80"/></linearGradient>
<radialGradient id="i3fur" cx=".45" cy=".35" r=".75"><stop offset="0" stop-color="#b56a3c"/><stop offset=".6" stop-color="#8e4828"/><stop offset="1" stop-color="#66301a"/></radialGradient>
<radialGradient id="i3face" cx=".42" cy=".5" r=".6"><stop offset="0" stop-color="#e8ba8a"/><stop offset=".55" stop-color="#d09560"/><stop offset="1" stop-color="#a05c34"/></radialGradient>
<filter id="i3b1"><feGaussianBlur stdDeviation="1.1"/></filter>
<filter id="i3b3"><feGaussianBlur stdDeviation="3"/></filter>
<filter id="i3b6"><feGaussianBlur stdDeviation="6"/></filter>
</defs>
<g id="i3all">
<rect width="338" height="190" fill="url(#i3bg)"/>
<g filter="url(#i3b6)">
<path d="M-10 34 C30 30 60 34 96 42 L96 78 L-10 84Z" fill="#a27c8c"/>
<path d="M214 48 C260 42 310 44 348 48 V64 H214Z" fill="#d498a4"/><rect x="272" y="46" width="58" height="13" fill="#c48aa0"/>
<ellipse cx="14" cy="124" rx="22" ry="20" fill="#8a6244"/>
<ellipse cx="322" cy="112" rx="18" ry="10" fill="#b0683c"/>
<ellipse cx="310" cy="170" rx="30" ry="14" fill="#d8b48c"/>
<rect x="-10" y="150" width="80" height="50" fill="#e2b898"/>
</g>
<g filter="url(#i3b1)">
<!-- body -->
<path d="M62 190 Q48 140 84 100 Q110 70 150 70 Q230 66 268 110 Q296 146 286 190Z" fill="url(#i3fur)"/>
<path d="M236 96 Q284 110 290 170 L262 190 L232 150Z" fill="#7a3e22"/>
<path d="M100 120 Q150 160 220 130 Q232 160 224 190 L96 190 Q90 150 100 120Z" fill="#b46c3c"/>
<!-- arms -->
<path d="M64 128 Q44 150 50 176 Q56 190 70 182 Q74 160 86 142Z" fill="#6a3420"/>
<ellipse cx="59" cy="176" rx="11" ry="11" fill="#4a2618"/>
<path d="M262 150 Q290 156 288 182 L262 190Z" fill="#5a2c1a"/>
<ellipse cx="278" cy="176" rx="12" ry="12" fill="#4a2418"/>
<!-- belt -->
<path d="M82 168 Q160 192 242 166 L244 190 L82 190Z" fill="#7c3a1e"/>
<rect x="130" y="175" width="36" height="16" rx="2" fill="#d6d2cc"/><rect x="136" y="180" width="24" height="11" fill="#8a4426"/>
<path d="M72 172 L84 172 L86 190 L74 190Z" fill="#3a2218"/>
<!-- head -->
<ellipse cx="140" cy="88" rx="74" ry="52" fill="url(#i3fur)"/>
<ellipse cx="128" cy="98" rx="50" ry="38" fill="url(#i3face)"/>
<ellipse cx="212" cy="44" rx="9" ry="8" fill="#8a4a2a"/>
<!-- mouth -->
<path d="M108 108 Q140 130 176 96 Q180 112 160 126 Q134 136 112 122Z" fill="#2a1614"/>
<path d="M112 111 Q140 128 174 100 L170 110 L164 106 L160 116 L154 110 L150 120 L142 114 L138 124 L130 116 L126 124 L120 116Z" fill="#f6f0e4"/>
<!-- nose -->
<ellipse cx="123" cy="85" rx="15" ry="13" fill="#4e322c"/>
<ellipse cx="119" cy="81" rx="6" ry="4" fill="#7a5a50"/>
<!-- eyes -->
<path d="M90 70 Q100 64 110 72 Q100 76 92 74Z" fill="#1e1210"/>
<path d="M150 62 Q164 52 176 58 Q168 70 154 68Z" fill="#1e1210"/>
<ellipse cx="166" cy="60" rx="4" ry="3" fill="#f4efe6"/>
<path d="M84 66 L112 70 M146 60 L180 52" stroke="#5a2e1a" stroke-width="3" stroke-linecap="round"/>
<!-- drool -->
<path d="M132 124 Q133 140 131 150" stroke="#e8eef2" stroke-width="2" fill="none" stroke-linecap="round"/>
<!-- hat -->
<path d="M52 38 Q58 60 92 60 Q140 60 196 43 Q206 50 214 46 Q232 36 232 24 Q228 8 210 8 Q192 12 178 24 Q150 40 112 44 Q90 46 74 36 Q58 28 52 38Z" fill="#55301f"/><path d="M178 24 Q194 10 210 8 Q228 10 232 24 Q226 36 210 44 Q200 40 192 42Z" fill="#6a3a24"/>
<path d="M93 44 Q92 14 98 -4 L168 -4 Q175 12 176 28 Q150 44 93 44Z" fill="#44261b"/><path d="M150 -4 L168 -4 Q175 12 176 28 Q166 34 156 36 Q160 16 150 -4Z" fill="#2c1812"/>
<path d="M92 40 Q136 46 176 25 L177 31 Q138 52 93 46Z" fill="#6a3a24"/>
</g>
<!-- whiskers -->
<g stroke="#f3e6d6" stroke-width=".8" fill="none" opacity=".85">
<path d="M100 96 Q70 100 50 112 M100 102 Q74 112 58 128 M102 108 Q84 122 76 138"/>
<path d="M160 88 Q190 80 214 84 M162 94 Q194 92 216 102 M160 100 Q186 106 204 120"/>
</g>
<!-- star -->
<path d="M212 126 L217.6 140.6 L233 141.4 L221 151.2 L225 166.2 L212 157.8 L199 166.2 L203 151.2 L191 141.4 L206.4 140.6Z" fill="#e4e4e6" stroke="#8a8a90" stroke-width="1"/>
<path d="M212 132 L215 142 L212 156 L209 142Z" fill="#fff" opacity=".8"/>
</g>
</svg></div>
<span class="t num" style="left:763.7px;top:1080.8px;font-size:29px;font-weight:700;">3</span>
<span class="t" style="left:881.0px;top:1060.2px;font-size:28.8px;letter-spacing:0.77px;color:#2b3146;">&quot;Well, well. What’s this? Another worm</span>
<span class="t" style="left:881.0px;top:1100.6px;font-size:28.8px;letter-spacing:0.89px;color:#2b3146;">wrigglin’ where he don’t belong.&quot;</span>
<span class="t cell" style="left:1540.7px;top:1081.5px;font-size:28.1px;">MCU</span>
<span class="t cell" style="left:1871.1px;top:1080.8px;font-size:29px;letter-spacing:1.22px;">Zoom</span>
<span class="t cell" style="left:2180.0px;top:1080.8px;font-size:29px;letter-spacing:-0.88px;z-index:2;">Swish Pan</span>
<div class="hline" style="top:1211px"></div>
<div class="cb" style="left:236.5px;top:1310.7px"></div>
<div class="thumb" style="top:1235px"><svg width="338" height="190" viewBox="0 0 338 190" preserveAspectRatio="none">
<defs>
<linearGradient id="i4sky" x1="0" y1="0" x2="0" y2="1"><stop offset="0" stop-color="#68adea"/><stop offset=".55" stop-color="#84bbed"/><stop offset="1" stop-color="#a9ceee"/></linearGradient>
<linearGradient id="i4gr" x1="0" y1="0" x2="0" y2="1"><stop offset="0" stop-color="#e4c29a"/><stop offset=".2" stop-color="#ead4bc"/><stop offset="1" stop-color="#dfc2a3"/></linearGradient>
<linearGradient id="i4body" x1="0" y1="0" x2="1" y2="0"><stop offset="0" stop-color="#f6c8b4"/><stop offset=".6" stop-color="#f0b09c"/><stop offset="1" stop-color="#d98c80"/></linearGradient>
<filter id="i4b1"><feGaussianBlur stdDeviation="1.1"/></filter>
<filter id="i4b2"><feGaussianBlur stdDeviation="2.4"/></filter>
</defs>
<rect width="338" height="100" fill="url(#i4sky)"/>
<g filter="url(#i4b2)">
<path d="M-6 68 C30 74 70 84 110 90 C130 92 150 92 162 93 L162 112 L-6 112Z" fill="#d9a878"/>
<path d="M-6 78 C20 80 44 84 60 92 C70 98 78 102 77 104 C50 108 20 107 -6 106Z" fill="#ad7e5e"/>
<path d="M70 92 C100 94 140 92 160 94 L160 100 L90 102Z" fill="#c49470"/>
<path d="M-6 104 C40 108 100 106 170 104 L344 102 V126 H-6Z" fill="#e3bc90"/>
<path d="M250 92 C280 86 310 78 344 72 V112 H250Z" fill="#e4b684"/>
</g>
<rect x="-4" y="120" width="346" height="76" fill="url(#i4gr)"/>
<g fill="#b89878" opacity=".5" filter="url(#i4b1)"><ellipse cx="30" cy="150" rx="10" ry="1.6"/><ellipse cx="96" cy="142" rx="8" ry="1.4"/><ellipse cx="128" cy="150" rx="6" ry="1.4"/><ellipse cx="60" cy="134" rx="7" ry="1.2"/><ellipse cx="300" cy="140" rx="8" ry="1.4"/><ellipse cx="140" cy="166" rx="9" ry="1.6"/></g>
<g fill="none" stroke="#4e3424" stroke-linecap="round" stroke-linejoin="round">
<path stroke-width="2.8" d="M0 172 L32 172 L44 168 L56 163.5 L66 159.5 L98 154 M32 172 L33 180 L35 190"/>
<path stroke-width="2" d="M66 159.5 L72.5 169 L94 173 L116 177.5 L122 183 L140 187.5"/>
<path stroke-width="1.2" d="M22 152 L30 156 L44 168 M116 177.5 L140 174 L160 172 M0 186 L20 184 L33 180 M56 190 L70 184 L94 186"/>
</g>
<g filter="url(#i4b1)">
<!-- tail -->
<path d="M240 150 Q290 140 330 156 Q342 166 336 190 L240 190Z" fill="#eeb4a4"/>
<!-- body column -->
<path d="M200 60 Q250 54 256 100 Q262 140 268 190 L196 190 Q204 120 200 60Z" fill="url(#i4body)"/>
<!-- head -->
<ellipse cx="206" cy="58" rx="47" ry="36" fill="#f3bfab"/>
<ellipse cx="196" cy="44" rx="34" ry="18" fill="#f6ccb8"/>
<ellipse cx="236" cy="70" rx="18" ry="26" fill="#e9a898"/>
<!-- beard -->
<path d="M158 76 Q152 120 160 150 Q166 176 176 186 Q186 170 190 182 Q200 160 206 172 Q222 140 230 84 Q200 70 186 86 Q170 70 158 76Z" fill="#f1ede9"/>
<path d="M176 90 Q172 130 182 170 M198 92 Q200 130 196 164 M214 90 Q212 120 206 150" stroke="#cfc8c2" stroke-width="1.6" fill="none"/>
<!-- eyes -->
<ellipse cx="167.5" cy="57" rx="8" ry="10.5" fill="#16100e"/>
<ellipse cx="217" cy="58" rx="12" ry="13" fill="#16100e"/>
<!-- mouth -->
<path d="M182 82 Q192 74 202 84" stroke="#7a3a30" stroke-width="2.6" fill="none" stroke-linecap="round"/>
</g>
<g fill="none" stroke="#d9907e" stroke-width="1.3" opacity=".7">
<path d="M226 110 Q246 106 258 112 M226 126 Q248 122 262 130 M224 144 Q250 140 264 150 M222 162 Q250 160 266 170 M284 146 Q282 166 286 188 M304 150 Q302 170 306 190 M322 156 Q320 172 324 190"/>
</g>
<circle cx="170" cy="53" r="1.6" fill="#fff"/><circle cx="221" cy="53" r="2" fill="#fff"/>
</svg></div>
<span class="t num" style="left:763.7px;top:1317.8px;font-size:29px;font-weight:700;">4</span>
<span class="t" style="left:881.0px;top:1297.2px;font-size:28.8px;letter-spacing:0.60px;color:#2b3146;">&quot;Sheriff Prickles won’t let us leave... that’s</span>
<span class="t" style="left:881.0px;top:1337.6px;font-size:28.8px;letter-spacing:0.71px;color:#2b3146;">why we never found you, Jerry!&quot;</span>
<span class="t cell" style="left:1540.7px;top:1318.5px;font-size:28.1px;">MCU</span>
<span class="t cell" style="left:1810.5px;top:1317.8px;font-size:29px;letter-spacing:0.42px;">Shoulder Level</span>
<span class="t cell" style="left:2190.0px;top:1317.8px;font-size:29px;letter-spacing:-0.02px;z-index:2;">Tracking</span>
<div class="hline" style="top:1448px"></div>
<div class="cb" style="left:236.5px;top:1547.7px"></div>
<div class="thumb" style="top:1472px"><svg width="338" height="190" viewBox="0 0 338 190" preserveAspectRatio="none">
<defs>
<linearGradient id="i5gr" x1="0" y1="0" x2="0" y2="1"><stop offset="0" stop-color="#e6c096"/><stop offset=".22" stop-color="#eed4b0"/><stop offset=".6" stop-color="#ecd0aa"/><stop offset="1" stop-color="#e2c29c"/></linearGradient>
<radialGradient id="i5head" cx=".38" cy=".3" r=".8"><stop offset="0" stop-color="#f8cabb"/><stop offset=".55" stop-color="#f0ae9e"/><stop offset="1" stop-color="#d98a80"/></radialGradient>
<linearGradient id="i5neck" x1="0" y1="0" x2="1" y2="0"><stop offset="0" stop-color="#d98a80"/><stop offset=".4" stop-color="#f4bca8"/><stop offset="1" stop-color="#eaa694"/></linearGradient>
<filter id="i5b1"><feGaussianBlur stdDeviation="1"/></filter>
<filter id="i5b3"><feGaussianBlur stdDeviation="2.6"/></filter>
</defs>
<rect width="338" height="190" fill="url(#i5gr)"/>
<g filter="url(#i5b3)">
<path d="M-6 -6 H344 V22 C300 26 260 28 220 22 C180 18 140 20 100 16 C60 10 20 2 -6 -2Z" fill="#6ab4ee"/>
<path d="M-6 2 C30 6 70 14 100 20 C80 30 40 38 -6 40Z" fill="#e2b07c"/>
<path d="M96 22 C120 20 140 22 150 21 C164 16 178 14 190 15 C210 20 236 26 252 25 C280 20 310 18 344 17 V42 H96Z" fill="#d8a878"/>
<path d="M252 26 C280 21 310 19 344 18 V36 C310 38 280 36 252 26Z" fill="#b98c6a"/>
<path d="M150 22 C164 16 178 14 188 16 C180 22 170 28 160 30Z" fill="#c09470"/>
<rect x="-6" y="36" width="350" height="10" fill="#e9caa2"/>
</g>
<g fill="none" stroke="#47291a" stroke-linecap="round" stroke-linejoin="round">
<path stroke-width="1.6" d="M246 63 L229 74 L205.5 89.5" opacity=".8"/>
<path stroke-width="3" d="M205.5 89.5 L237.5 98 L243 112 L229 126"/>
<path stroke-width="4.2" d="M229 126 L195.5 134 L172 141 L174.5 154 L198.5 163.5 L229 166.5 L251.5 175 L263 190"/>
<path stroke-width="1.5" d="M243 112 L279.5 110 L338 117 M229 126 L274 138 L294 148 L338 151 M311.5 154 L305 163.5 L263 168 M172 141 L145 138 M198.5 163.5 L191.5 170.5 L147 180"/>
<path stroke-width="1.4" d="M0 126 L24 130 L27 142 L25 154 L21 172 M0 150 L25 154 M147 180 L152 190 M294 148 L290 168 L300 190"/>
<path stroke-width="1" d="M260 72 L290 78 L322 74 M296 96 L338 100"/>
</g>
<g filter="url(#i5b1)">
<path d="M28 176 Q50 170 66 178 L66 194 L28 194Z" fill="#6e4c42"/>
<path d="M-4 174 Q20 170 42 178 L46 194 L-4 194Z" fill="#e6a0a8"/>
<path d="M66 104 Q62 150 56 194 L146 194 Q142 150 146 100Z" fill="url(#i5neck)"/>
<ellipse cx="116" cy="63" rx="61.5" ry="48.5" fill="url(#i5head)"/>
<ellipse cx="148" cy="82" rx="29" ry="25" fill="#f1b6a0"/>
<path d="M120 84 Q136 88 152 80 Q150 100 138 104 Q126 102 120 84Z" fill="#7e2c26"/>
<ellipse cx="138" cy="98" rx="9" ry="4.6" fill="#e88c8c"/>
<ellipse cx="99.2" cy="61.5" rx="14.5" ry="14.8" fill="#170d0b"/>
<ellipse cx="163.5" cy="53.8" rx="7.6" ry="11" fill="#170d0b"/>
</g>
<circle cx="106" cy="54" r="2.6" fill="#fff" opacity=".9"/><circle cx="160.6" cy="47.6" r="1.8" fill="#fff" opacity=".9"/>
<path d="M103.4 80 Q104.6 90 103.4 97" stroke="#f3dcd4" stroke-width="2.4" fill="none" stroke-linecap="round" opacity=".9"/>
<g fill="none" stroke="#d58678" stroke-width="1.3" opacity=".6">
<path d="M66 122 Q104 132 145 120 M64 140 Q104 150 144 138 M62 158 Q104 168 144 156 M60 176 Q104 186 146 174"/>
</g>
</svg></div>
<span class="t num" style="left:763.7px;top:1554.8px;font-size:29px;font-weight:700;">5</span>
<span class="t" style="left:881.0px;top:1554.4px;font-size:28.8px;letter-spacing:0.73px;color:#2b3146;">&quot;You mean... you’re my family?&quot;</span>
<span class="t cell" style="left:1553.2px;top:1556.4px;font-size:27.0px;">CU</span>
<span class="t cell" style="left:1848.2px;top:1554.8px;font-size:29px;letter-spacing:-0.46px;">Eye Level</span>
<div class="hline" style="top:1685px"></div>
<div class="cb" style="left:236.5px;top:1784.7px"></div>
<div class="thumb" style="top:1709px"><svg width="338" height="190" viewBox="0 0 338 190"><use href="#i1all"/></svg></div>
<span class="t num" style="left:763.7px;top:1791.8px;font-size:29px;font-weight:700;">1</span>
<span class="t" style="left:881.0px;top:1730.8px;font-size:28.8px;letter-spacing:1.13px;color:#1f2230;">Worm families huddle together, watching</span>
<span class="t" style="left:881.0px;top:1771.2px;font-size:28.8px;letter-spacing:0.72px;color:#1f2230;">Jerry. Their faces brighten, but fear</span>
<span class="t" style="left:881.0px;top:1811.6px;font-size:28.8px;letter-spacing:0.46px;color:#1f2230;">quickly washes over them as a SHADOW</span>
<span class="t" style="left:881.0px;top:1852.0px;font-size:28.8px;letter-spacing:0.63px;color:#1f2230;">looms.</span>
<span class="t cell" style="left:1552.4px;top:1793.3px;font-size:27.13px;">MS</span>
<span class="t cell" style="left:1810.5px;top:1791.8px;font-size:29px;letter-spacing:0.42px;">Shoulder Level</span>
<svg class="abs" style="left:1700px;top:740px;z-index:4" width="520" height="400" viewBox="1700 740 520 400"><path d="M1726.2 1043.5 L1718.1 1054.6 L1722.7 1066.8 L1746.0 1098.2 L1772.2 1123.8 L1786.7 1115.7 L1853.7 1073.5 L1941.0 1021.1 L2010.8 976.0 L2077.7 933.8 L2095.2 961.5 L2110.6 990.6 L2112.6 1008.0 L2121.3 1015.6 L2130.1 1011.0 L2150.4 961.5 L2173.7 894.6 L2194.1 836.4 L2206.3 810.2 L2202.8 793.3 L2194.1 790.4 L2144.6 782.6 L2086.4 772.4 L2037.0 764.2 L2019.5 761.3 L2011.4 764.2 L2009.9 773.0 L2001.2 767.1 L1996.8 775.9 L2007.9 801.5 L2031.1 848.0 L2019.5 859.7 L1970.0 894.6 L1911.9 932.4 L1853.7 970.2 L1795.5 1002.2 L1757.7 1019.7Z" fill="#6c3cfc" stroke="#6c3cfc" stroke-width="3.6" stroke-linejoin="round"/><path d="M2007.9 891.1L2041.3 871.9" stroke="#fff" stroke-width="5" stroke-linecap="round"/><path d="M1911.9 967.3L2031.1 883.5" stroke="#fff" stroke-width="2.2" stroke-linecap="round"/><path d="M1866.8 994.9L1900.2 973.1" stroke="#fff" stroke-width="2.6" stroke-linecap="round"/><path d="M1997.7 946.4L2056.8 908.2" stroke="#fff" stroke-width="3" stroke-linecap="round"/><path d="M1969.5 969.6L1989.8 957.7" stroke="#fff" stroke-width="2.2" stroke-linecap="round"/><path d="M1920.6 1001.6L1937.5 992.6" stroke="#fff" stroke-width="1.8" stroke-linecap="round"/><path d="M2114.6 904.2L2132.4 926.0" stroke="#fff" stroke-width="3.2" stroke-linecap="round"/><path d="M2093.1 920.2L2117.8 955.1" stroke="#fff" stroke-width="3.2" stroke-linecap="round"/><path d="M2149.6 845.7L2158.6 857.6" stroke="#fff" stroke-width="2.6" stroke-linecap="round"/><path d="M2127.2 816.0L2130.7 821.8" stroke="#fff" stroke-width="1.2" stroke-linecap="round"/><polygon fill="#fff" points="2163.5,820.4 2173.7,818.9 2172.3,829.1"/><polygon fill="#fff" points="1743.1,1069.1 1762.9,1059.8 1748.3,1077.3"/><circle cx="2024.5" cy="801.5" r="2" fill="#fff"/><circle cx="1770.2" cy="1100.6" r="1.8" fill="#fff"/></svg>
<div class="abs" style="left:0;top:0;z-index:3">
<div id="panel" class="abs"></div>
<div class="abs" style="left:2207px;top:423px;width:877px;height:80px;background:linear-gradient(#f6f6f9,#fbfbfd 50%,#fff)"></div>
<span class="t" style="left:2328.4px;top:190.4px;font-size:32px;letter-spacing:0.39px;font-weight:700;color:#1b1b27;">“Sc. 2 | EXT. MAIN STREET - DAY”</span>
<span class="t mb" style="left:2262.0px;top:267.5px;font-size:29.5px;letter-spacing:1.34px;color:#5b78f6;">Comments</span>
<span class="t mb" style="left:2644.8px;top:267.5px;font-size:29.5px;letter-spacing:0.20px;color:#3e4560;">Who has access</span>
<div class="abs" style="left:2207px;top:331px;width:877px;height:2px;background:#e3e5f0"></div>
<div class="abs" style="left:2261px;top:326px;width:317px;height:5px;background:#5b78f6"></div>
<span class="t sb" style="left:2262.0px;top:362.2px;font-size:27.5px;letter-spacing:0.83px;color:#1c1c28;">Hide Completed</span>
<span class="t" style="left:2330.3px;top:504.6px;font-size:31px;letter-spacing:0.74px;color:#6b7699;">Enter Comment...</span>
<div class="abs" style="left:2207px;top:612px;width:864px;height:4px;background:#e4e9f2"></div>
<div class="abs" style="left:2261px;top:686px;width:54px;height:54px;border-radius:50%;background:#c6184f"></div>
<span class="t mb" style="left:2271.5px;top:702.2px;font-size:23.75px;color:#fff;">AC</span>
<span class="t sb" style="left:2329.5px;top:699.1px;font-size:30px;letter-spacing:0.47px;color:#1f1f2b;">Andrew Cavalluzzi</span>
<span class="t sb" style="left:2612.5px;top:701.3px;font-size:27.2px;letter-spacing:-0.11px;color:#4b5580;">Sep 24 @ 3:50pm</span>
<span class="t" style="left:2261.5px;top:756.2px;font-size:28.8px;letter-spacing:0.83px;color:#1f2230;">Just completed version one of the shot list. Let me know</span>
<span class="t" style="left:2261.5px;top:796.7px;font-size:28.8px;letter-spacing:1.11px;color:#1f2230;">what you think or if modifications are needed before</span>
<span class="t" style="left:2261.5px;top:837.2px;font-size:28.8px;letter-spacing:1.15px;color:#1f2230;">rendering.</span>
<span class="t sb" style="left:2263.0px;top:907.3px;font-size:28px;letter-spacing:0.85px;color:#4a5580;">Reply</span>
<div class="abs" style="left:2261px;top:1026px;width:756px;height:89px;border:2px solid #e2e6f3;border-radius:9px;background:#fff"></div>
<span class="t" style="left:2285.8px;top:1056.8px;font-size:30px;letter-spacing:0.33px;color:#6a7398;">Add new comment...</span>
<div class="abs" style="left:2263px;top:1138px;width:183px;height:68px;border-radius:9px;background:#5f76fb"></div>
<span class="t sb" style="left:2291.4px;top:1158.0px;font-size:28px;letter-spacing:0.87px;color:#fff;">Comment</span>
<div class="abs" style="left:2459px;top:1138px;width:145.5px;height:68px;border-radius:9px;border:2px solid #69729d;background:#fff"></div>
<span class="t mb" style="left:2489.5px;top:1158.0px;font-size:28px;letter-spacing:-0.43px;color:#69729d;">Cancel</span>
<div class="abs" style="left:2207px;top:1350px;width:864px;height:4px;background:#e4e9f2"></div>
<div class="abs" id="rstrip" style="left:3082px;top:137px;width:2px;height:1792px;background:#f4f4f7"></div>
<svg class="abs" style="left:2207px;top:137px" width="877" height="1300" viewBox="2207 137 877 1300"><path d="M2279.58 197.51L2285.28 187.64A18.2 18.2 0 0 1 2295.88 197.51Z" fill="#7343fc"/><path d="M2285.70 201.49L2297.10 201.49A18.2 18.2 0 0 1 2293.85 215.60Z" fill="#8c66fd"/><path d="M2285.32 208.78L2291.02 218.64A18.2 18.2 0 0 1 2277.18 222.89Z" fill="#b7a2fd"/><path d="M2278.82 212.09L2273.12 221.96A18.2 18.2 0 0 1 2262.52 212.09Z" fill="#9d7ffd"/><path d="M2272.70 208.11L2261.30 208.11A18.2 18.2 0 0 1 2264.55 194.00Z" fill="#7b4dfd"/><path d="M2273.08 200.82L2267.38 190.96A18.2 18.2 0 0 1 2281.22 186.71Z" fill="#6b3bff"/><path d="M2990 225.4 H3010 M3002.4 216.6 L3011 225.4 L3002.4 234.2" fill="none" stroke="#8389b0" stroke-width="2.4" stroke-linecap="round" stroke-linejoin="round"/><path d="M3018 211.6 V239.6" stroke="#8389b0" stroke-width="2.4" stroke-linecap="round"/><circle cx="2504.4" cy="376.2" r="16.8" fill="#d3d6e4"/><path d="M2495.6 376.6 L2501.8 382.8 L2514 370" fill="none" stroke="#5f6a96" stroke-width="2.8" stroke-linecap="round" stroke-linejoin="round"/><clipPath id="cavp"><circle cx="2288.2" cy="519.8" r="27"/></clipPath>
<g clip-path="url(#cavp)">
<rect x="2261.2" y="492.8" width="54.0" height="54.0" fill="#a3d6d6"/>
<path d="M2296.8 523.5 L2302.9 514.9 L2309.1 513.7 L2315.2 517.3 L2315.2 546.8 L2293.1 546.8Z" fill="#a3a392"/>
<path d="M2266.1 537.0 L2275.9 533.3 L2278.4 546.8 L2266.1 546.8Z" fill="#9c9c98"/>
<path d="M2273.5 546.8 Q2274.7 535.8 2279.6 533.3 L2298.0 530.8 Q2300.5 537.0 2300.5 546.8Z" fill="#1e2438"/>
<path d="M2277.6 527.2 L2278.4 546.8 L2296.3 546.8 L2295.6 529.6Z" fill="#bf7552"/>
<path d="M2277.9 508.8 Q2277.2 524.7 2282.1 530.8 Q2288.2 536.2 2294.3 534.5 Q2299.7 527.2 2300.0 514.9 Q2298.0 506.3 2288.2 506.3Z" fill="#c8825e"/>
<ellipse cx="2275.4" cy="521.0" rx="2.5" ry="3.7" fill="#d4643c"/>
<path d="M2277.6 518.6 Q2278.4 528.4 2284.5 533.3 Q2289.4 536.5 2294.3 534.5 Q2296.8 530.8 2296.5 525.9 Q2293.1 523.5 2289.4 525.4 Q2287.0 528.4 2290.7 530.1 Q2288.2 532.1 2284.5 529.6 Q2280.8 524.7 2280.3 518.6Z" fill="#1f1a1e"/>
<path d="M2272.2 514.9 Q2271.0 505.1 2278.4 500.2 Q2285.7 495.3 2293.1 498.2 Q2299.2 502.6 2300.0 511.2 Q2295.6 506.3 2288.2 506.8 Q2283.3 508.8 2280.8 516.1 L2277.6 521.0 Q2273.5 519.8 2272.2 514.9Z" fill="#241d22"/>
<path d="M2274.7 508.8 Q2275.9 500.2 2284.5 497.0 Q2291.9 495.7 2295.6 501.4 Q2288.2 501.4 2283.3 505.1 Q2278.4 507.5 2274.7 508.8Z" fill="#8a6b58"/>
<ellipse cx="2288.7" cy="518.7" rx="3.6" ry="3.2" fill="#bf7f3a"/>
<ellipse cx="2297.8" cy="519.2" rx="3.3" ry="3.1" fill="#bf7f3a"/>
<path d="M2278.4 516.6 L2285.0 517.6 M2292.1 518.3 L2294.6 518.6" stroke="#d9d0c8" stroke-width="0.9" fill="none"/>
</g><circle cx="2949.4" cy="713.2" r="21.4" fill="#fff" stroke="#8a90b5" stroke-width="2.2"/><path d="M2941.6 714.2 L2946.6 719.2 L2957 708.2" fill="none" stroke="#8a90b5" stroke-width="2.4" stroke-linecap="round" stroke-linejoin="round"/></svg>
</div>
</body></html>
